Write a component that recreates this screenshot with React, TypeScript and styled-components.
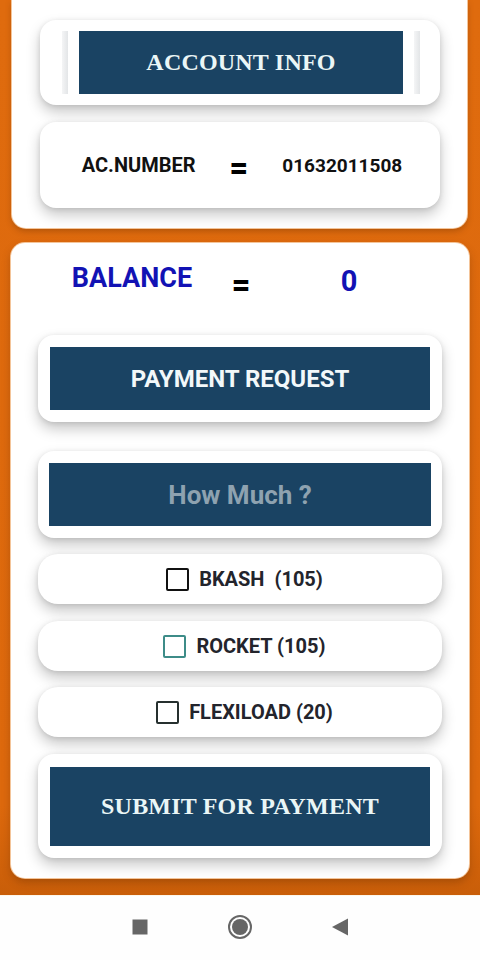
import React from "react";
import styled, { createGlobalStyle } from "styled-components";

const Global = createGlobalStyle`
  html, body { margin: 0; padding: 0; }
  body { font-family: Roboto, "Liberation Sans", sans-serif; background: #ffffff; }
  * { box-sizing: border-box; }
`;

const Screen = styled.div`
  width: 480px;
  height: 960px;
  display: flex;
  flex-direction: column;
  overflow: hidden;
`;

const OrangeArea = styled.div`
  height: 895px;
  background: linear-gradient(180deg, #df6b0e 0%, #dd690d 90%, #c95e09 100%);
  display: flex;
  flex-direction: column;
  gap: 15px;
  padding: 0 11px;
`;

const TopCard = styled.section`
  margin: 0 2px 0 1px;
  background: #ffffff;
  border-radius: 0 0 14px 14px;
  box-shadow: 0 0 0 1px #f4c59a, 0 3px 6px rgba(90, 40, 0, 0.35);
  padding: 20px 27px 20px 28px;
  display: flex;
  flex-direction: column;
  gap: 17px;
`;

const MainCard = styled.section`
  background: #ffffff;
  border-radius: 14px;
  box-shadow: 0 0 0 1px #f4c59a, 0 4px 8px rgba(90, 40, 0, 0.35);
  padding: 0 27px 20px 27px;
  display: flex;
  flex-direction: column;
`;

const Tile = styled.div<{ $h: number; $r?: number; $mt?: number }>`
  height: ${(p) => p.$h}px;
  margin-top: ${(p) => p.$mt ?? 0}px;
  background: #ffffff;
  border-radius: ${(p) => p.$r ?? 16}px;
  box-shadow: 0 7px 14px rgba(0, 0, 0, 0.22), 0 1px 5px rgba(0, 0, 0, 0.1);
  display: flex;
  align-items: center;
  justify-content: center;
`;

const InfoFrame = styled.div`
  height: 63px;
  width: 358px;
  margin-left: 2px;
  display: flex;
  align-items: stretch;
`;

const FrameBar = styled.span`
  width: 6px;
  background: linear-gradient(90deg, #f4f5f6 0%, #e3e5e7 100%);
`;

const FrameInner = styled.div`
  flex: 1;
  padding: 0 11px;
  display: flex;
`;

const NavyBlock = styled.div<{ $h?: number }>`
  flex: 1;
  height: ${(p) => p.$h ?? 63}px;
  background: #1a4363;
  display: flex;
  align-items: center;
  justify-content: center;
`;

const SerifLabel = styled.span`
  font-family: "Liberation Serif", "Times New Roman", serif;
  font-weight: 700;
  font-size: 24px;
  color: #eaf6f6;
  letter-spacing: 0.2px;
`;

const SansLabel = styled.span<{ $muted?: boolean }>`
  font-family: Roboto, "Liberation Sans", sans-serif;
  font-weight: 700;
  font-size: ${(p) => (p.$muted ? 26 : 24)}px;
  color: ${(p) => (p.$muted ? "#8ea2b0" : "#f2f8fa")};
`;

const PaddedTile = styled(Tile)`
  padding: 12px;
`;

const AcRow = styled.div`
  display: flex;
  align-items: center;
  gap: 34px;
  padding-left: 4px;
  font-family: Roboto, "Liberation Sans", sans-serif;
  font-weight: 700;
  color: #111111;
`;

const AcText = styled.span<{ $size: number }>`
  font-size: ${(p) => p.$size}px;
`;

const Equals = styled.span<{ $shift?: number }>`
  font-family: Roboto, "Liberation Sans", sans-serif;
  font-weight: 900;
  font-size: 32px;
  line-height: 1;
  color: #000000;
  position: relative;
  top: ${(p) => p.$shift ?? 0}px;
`;

const BalanceRow = styled.div`
  height: 74px;
  margin-bottom: 18px;
  display: grid;
  grid-template-columns: 188px 30px 1fr;
  align-items: center;
  justify-items: center;
  font-family: Roboto, "Liberation Sans", sans-serif;
  font-weight: 700;
  color: #1212b4;
`;

const BalanceLabel = styled.span`
  font-size: 27px;
  margin-top: -4px;
`;

const BalanceValue = styled.span`
  font-size: 29px;
  margin-top: 2px;
`;

const CheckTile = styled(Tile)`
  gap: 10px;
  padding-left: 9px;
  font-family: Roboto, "Liberation Sans", sans-serif;
  font-weight: 700;
  font-size: 20px;
  color: #23242c;
`;

const Box = styled.span<{ $color: string }>`
  width: 23px;
  height: 23px;
  border: 2.5px solid ${(p) => p.$color};
  border-radius: 2px;
  background: #ffffff;
`;

const NavBar = styled.nav`
  flex: 1;
  background: #fefefe;
  border-top: 1px solid #fdf6ea;
  display: flex;
  align-items: center;
  justify-content: center;
  padding-bottom: 2px;
`;

const NavSlot = styled.div`
  width: 100px;
  display: flex;
  justify-content: center;
`;

const options = [
  { label: "BKASH\u00a0\u00a0(105)", color: "#111111" },
  { label: "ROCKET (105)", color: "#3d8c88" },
  { label: "FLEXILOAD (20)", color: "#26302f" },
];

export default function App() {
  return (
    <Screen>
      <Global />
      <OrangeArea>
        <TopCard>
          <Tile $h={85}>
            <InfoFrame>
              <FrameBar />
              <FrameInner>
                <NavyBlock>
                  <SerifLabel>ACCOUNT INFO</SerifLabel>
                </NavyBlock>
              </FrameInner>
              <FrameBar />
            </InfoFrame>
          </Tile>
          <Tile $h={86}>
            <AcRow>
              <AcText $size={20}>AC.NUMBER</AcText>
              <Equals $shift={2}>=</Equals>
              <AcText $size={19}>01632011508</AcText>
            </AcRow>
          </Tile>
        </TopCard>

        <MainCard>
          <BalanceRow>
            <BalanceLabel>BALANCE</BalanceLabel>
            <Equals $shift={4}>=</Equals>
            <BalanceValue>0</BalanceValue>
          </BalanceRow>

          <PaddedTile $h={87}>
            <NavyBlock>
              <SansLabel>PAYMENT REQUEST</SansLabel>
            </NavyBlock>
          </PaddedTile>

          <PaddedTile $h={87} $mt={29} style={{ paddingLeft: 11, paddingRight: 11 }}>
            <NavyBlock>
              <SansLabel $muted>How Much ?</SansLabel>
            </NavyBlock>
          </PaddedTile>

          {options.map((o, i) => (
            <CheckTile key={o.label} $h={50} $r={20} $mt={i === 1 ? 17 : 16}>
              <Box $color={o.color} />
              <span>{o.label}</span>
            </CheckTile>
          ))}

          <PaddedTile $h={104} $mt={17}>
            <NavyBlock $h={79}>
              <SerifLabel>SUBMIT FOR PAYMENT</SerifLabel>
            </NavyBlock>
          </PaddedTile>
        </MainCard>
      </OrangeArea>

      <NavBar>
        <NavSlot>
          <svg width="16" height="16" viewBox="0 0 16 16">
            <rect x="0.5" y="0.5" width="15" height="15" fill="#666666" />
          </svg>
        </NavSlot>
        <NavSlot>
          <svg width="26" height="26" viewBox="0 0 26 26">
            <circle cx="13" cy="13" r="11" fill="none" stroke="#666666" strokeWidth="2" />
            <circle cx="13" cy="13" r="8" fill="#666666" />
          </svg>
        </NavSlot>
        <NavSlot>
          <svg width="17" height="18" viewBox="0 0 17 18">
            <polygon points="0,9 16,0.5 16,17.5" fill="#666666" />
          </svg>
        </NavSlot>
      </NavBar>
    </Screen>
  );
}
